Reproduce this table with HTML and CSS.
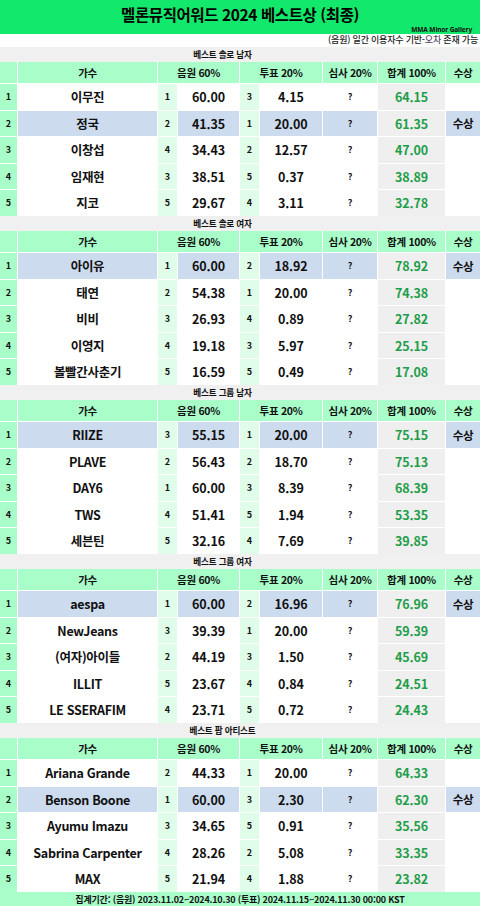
FILE: index.html
```html
<!DOCTYPE html>
<html lang="ko">
<head>
<meta charset="utf-8">
<title>멜론뮤직어워드 2024 베스트상 (최종)</title>
<link rel="stylesheet" href="styles.css">
</head>
<body>
<div class="page">
  <header class="titlebar">
    <h1 class="title">멜론뮤직어워드 2024 베스트상 (최종)</h1>
    <div class="credit">MMA Minor Gallery</div>
  </header>
  <div class="note">(음원) 일간 이용자수 기반-<span class="dim">오차</span> 존재 가능</div>

  <section class="sec">
    <div class="sec-title">베스트 솔로 남자</div>
    <div class="grid">
      <div class="row head"><div class="c"></div><div class="c">가수</div><div class="c span2">음원 60%</div><div class="c span2">투표 20%</div><div class="c">심사 20%</div><div class="c">합계 100%</div><div class="c">수상</div></div>
      <div class="row"><div class="rk">1</div><div class="name">이무진</div><div class="r">1</div><div class="v">60.00</div><div class="r">3</div><div class="v">4.15</div><div class="q">?</div><div class="sum">64.15</div><div class="aw"></div></div>
      <div class="row hl"><div class="rk">2</div><div class="name">정국</div><div class="r">2</div><div class="v">41.35</div><div class="r">1</div><div class="v">20.00</div><div class="q">?</div><div class="sum">61.35</div><div class="aw">수상</div></div>
      <div class="row"><div class="rk">3</div><div class="name">이창섭</div><div class="r">4</div><div class="v">34.43</div><div class="r">2</div><div class="v">12.57</div><div class="q">?</div><div class="sum">47.00</div><div class="aw"></div></div>
      <div class="row"><div class="rk">4</div><div class="name">임재현</div><div class="r">3</div><div class="v">38.51</div><div class="r">5</div><div class="v">0.37</div><div class="q">?</div><div class="sum">38.89</div><div class="aw"></div></div>
      <div class="row"><div class="rk">5</div><div class="name">지코</div><div class="r">5</div><div class="v">29.67</div><div class="r">4</div><div class="v">3.11</div><div class="q">?</div><div class="sum">32.78</div><div class="aw"></div></div>
    </div>
  </section>

  <section class="sec">
    <div class="sec-title">베스트 솔로 여자</div>
    <div class="grid">
      <div class="row head"><div class="c"></div><div class="c">가수</div><div class="c span2">음원 60%</div><div class="c span2">투표 20%</div><div class="c">심사 20%</div><div class="c">합계 100%</div><div class="c">수상</div></div>
      <div class="row hl"><div class="rk">1</div><div class="name">아이유</div><div class="r">1</div><div class="v">60.00</div><div class="r">2</div><div class="v">18.92</div><div class="q">?</div><div class="sum">78.92</div><div class="aw">수상</div></div>
      <div class="row"><div class="rk">2</div><div class="name">태연</div><div class="r">2</div><div class="v">54.38</div><div class="r">1</div><div class="v">20.00</div><div class="q">?</div><div class="sum">74.38</div><div class="aw"></div></div>
      <div class="row"><div class="rk">3</div><div class="name">비비</div><div class="r">3</div><div class="v">26.93</div><div class="r">4</div><div class="v">0.89</div><div class="q">?</div><div class="sum">27.82</div><div class="aw"></div></div>
      <div class="row"><div class="rk">4</div><div class="name">이영지</div><div class="r">4</div><div class="v">19.18</div><div class="r">3</div><div class="v">5.97</div><div class="q">?</div><div class="sum">25.15</div><div class="aw"></div></div>
      <div class="row"><div class="rk">5</div><div class="name">볼빨간사춘기</div><div class="r">5</div><div class="v">16.59</div><div class="r">5</div><div class="v">0.49</div><div class="q">?</div><div class="sum">17.08</div><div class="aw"></div></div>
    </div>
  </section>

  <section class="sec">
    <div class="sec-title">베스트 그룹 남자</div>
    <div class="grid">
      <div class="row head"><div class="c"></div><div class="c">가수</div><div class="c span2">음원 60%</div><div class="c span2">투표 20%</div><div class="c">심사 20%</div><div class="c">합계 100%</div><div class="c">수상</div></div>
      <div class="row hl"><div class="rk">1</div><div class="name">RIIZE</div><div class="r">3</div><div class="v">55.15</div><div class="r">1</div><div class="v">20.00</div><div class="q">?</div><div class="sum">75.15</div><div class="aw">수상</div></div>
      <div class="row"><div class="rk">2</div><div class="name">PLAVE</div><div class="r">2</div><div class="v">56.43</div><div class="r">2</div><div class="v">18.70</div><div class="q">?</div><div class="sum">75.13</div><div class="aw"></div></div>
      <div class="row"><div class="rk">3</div><div class="name">DAY6</div><div class="r">1</div><div class="v">60.00</div><div class="r">3</div><div class="v">8.39</div><div class="q">?</div><div class="sum">68.39</div><div class="aw"></div></div>
      <div class="row"><div class="rk">4</div><div class="name">TWS</div><div class="r">4</div><div class="v">51.41</div><div class="r">5</div><div class="v">1.94</div><div class="q">?</div><div class="sum">53.35</div><div class="aw"></div></div>
      <div class="row"><div class="rk">5</div><div class="name">세븐틴</div><div class="r">5</div><div class="v">32.16</div><div class="r">4</div><div class="v">7.69</div><div class="q">?</div><div class="sum">39.85</div><div class="aw"></div></div>
    </div>
  </section>

  <section class="sec">
    <div class="sec-title">베스트 그룹 여자</div>
    <div class="grid">
      <div class="row head"><div class="c"></div><div class="c">가수</div><div class="c span2">음원 60%</div><div class="c span2">투표 20%</div><div class="c">심사 20%</div><div class="c">합계 100%</div><div class="c">수상</div></div>
      <div class="row hl"><div class="rk">1</div><div class="name">aespa</div><div class="r">1</div><div class="v">60.00</div><div class="r">2</div><div class="v">16.96</div><div class="q">?</div><div class="sum">76.96</div><div class="aw">수상</div></div>
      <div class="row"><div class="rk">2</div><div class="name">NewJeans</div><div class="r">3</div><div class="v">39.39</div><div class="r">1</div><div class="v">20.00</div><div class="q">?</div><div class="sum">59.39</div><div class="aw"></div></div>
      <div class="row"><div class="rk">3</div><div class="name">(여자)아이들</div><div class="r">2</div><div class="v">44.19</div><div class="r">3</div><div class="v">1.50</div><div class="q">?</div><div class="sum">45.69</div><div class="aw"></div></div>
      <div class="row"><div class="rk">4</div><div class="name">ILLIT</div><div class="r">5</div><div class="v">23.67</div><div class="r">4</div><div class="v">0.84</div><div class="q">?</div><div class="sum">24.51</div><div class="aw"></div></div>
      <div class="row"><div class="rk">5</div><div class="name">LE SSERAFIM</div><div class="r">4</div><div class="v">23.71</div><div class="r">5</div><div class="v">0.72</div><div class="q">?</div><div class="sum">24.43</div><div class="aw"></div></div>
    </div>
  </section>

  <section class="sec">
    <div class="sec-title">베스트 팝 아티스트</div>
    <div class="grid">
      <div class="row head"><div class="c"></div><div class="c">가수</div><div class="c span2">음원 60%</div><div class="c span2">투표 20%</div><div class="c">심사 20%</div><div class="c">합계 100%</div><div class="c">수상</div></div>
      <div class="row"><div class="rk">1</div><div class="name">Ariana Grande</div><div class="r">2</div><div class="v">44.33</div><div class="r">1</div><div class="v">20.00</div><div class="q">?</div><div class="sum">64.33</div><div class="aw"></div></div>
      <div class="row hl"><div class="rk">2</div><div class="name">Benson Boone</div><div class="r">1</div><div class="v">60.00</div><div class="r">3</div><div class="v">2.30</div><div class="q">?</div><div class="sum">62.30</div><div class="aw">수상</div></div>
      <div class="row"><div class="rk">3</div><div class="name">Ayumu Imazu</div><div class="r">3</div><div class="v">34.65</div><div class="r">5</div><div class="v">0.91</div><div class="q">?</div><div class="sum">35.56</div><div class="aw"></div></div>
      <div class="row"><div class="rk">4</div><div class="name">Sabrina Carpenter</div><div class="r">4</div><div class="v">28.26</div><div class="r">2</div><div class="v">5.08</div><div class="q">?</div><div class="sum">33.35</div><div class="aw"></div></div>
      <div class="row"><div class="rk">5</div><div class="name">MAX</div><div class="r">5</div><div class="v">21.94</div><div class="r">4</div><div class="v">1.88</div><div class="q">?</div><div class="sum">23.82</div><div class="aw"></div></div>
    </div>
  </section>

  <footer class="footer">집계기간: (음원) 2023.11.02~2024.10.30 (투표) 2024.11.15~2024.11.30 00:00 KST</footer>
</div>
</body>
</html>
```
FILE: styles.css
```css
* { box-sizing: border-box; }
html, body { margin: 0; padding: 0; background: #ffffff; }
body {
  font-family: "Noto Sans CJK KR", "Noto Sans", sans-serif;
  color: #111;
  width: 480px;
}
.page { width: 480px; }

.titlebar {
  background: #12e86b;
  height: 34px;
  display: flex;
  flex-direction: column;
  align-items: stretch;
  overflow: hidden;
}
.title {
  margin: 0;
  height: 25px;
  padding-top: 4px;
  font-size: 15.5px;
  line-height: 21px;
  font-weight: 700;
  text-align: center;
  letter-spacing: -0.4px;
  color: #000;
}
.credit {
  font-family: "Noto Sans", sans-serif;
  height: 9px;
  font-size: 6.5px;
  font-weight: 700;
  line-height: 9px;
  text-align: right;
  padding-right: 8px;
  letter-spacing: -0.1px;
  color: #111;
}
.note {
  height: 12.5px;
  font-size: 9px;
  line-height: 12.5px;
  text-align: right;
  padding-right: 2px;
  font-weight: 500;
  letter-spacing: -0.2px;
  color: #222;
  overflow: hidden;
}
.note .dim { color: #5a4d6a; }

.sec-title {
  background: #f0f0f0;
  height: 15.5px;
  font-size: 8.6px;
  line-height: 15.5px;
  font-weight: 700;
  text-align: center;
  padding-right: 35px;
  letter-spacing: -0.2px;
}

.grid {
  display: grid;
  grid-template-columns: 17px 139px 19px 61px 19px 62px 54px 67px 1fr;
  grid-template-rows: 21px repeat(5, 25.5px);
  column-gap: 1px;
  row-gap: 1px;
  background: #ffffff;
}
.row { display: contents; }
.row > div {
  display: flex;
  align-items: center;
  justify-content: center;
  font-weight: 700;
  white-space: nowrap;
}
.head .c {
  background: #a9fdc9;
  font-size: 10.5px;
  letter-spacing: -0.3px;
}
.head .span2 { grid-column: span 2; }

.rk { background: #a9fdc9; font-size: 9px; }
.r { background: #e0fdea; font-size: 9px; }
.name { background: #ffffff; font-size: 12.5px; letter-spacing: -0.3px; }
.v { background: #ffffff; font-size: 12.5px; letter-spacing: -0.1px; }
.q { background: #ffffff; font-size: 9px; }
.sum { background: #efefef; color: #1e9e4a; font-size: 12.5px; letter-spacing: -0.1px; }
.aw { background: #ffffff; font-size: 11.5px; letter-spacing: -0.3px; }

.row.hl .name,
.row.hl .v,
.row.hl .q,
.row.hl .aw { background: #cddbef; }

.footer {
  background: #a9fdc9;
  height: 15px;
  font-size: 9px;
  line-height: 15px;
  font-weight: 700;
  text-align: center;
  letter-spacing: -0.2px;
}
```
